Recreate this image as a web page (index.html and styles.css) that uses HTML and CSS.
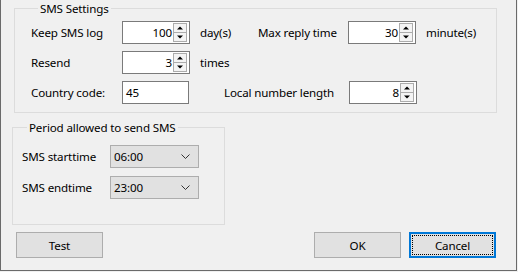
FILE: index.html
```html
<!DOCTYPE html>
<html lang="en">
<head>
    <meta charset="UTF-8" />
    <title>SMS Settings</title>
    <link rel="stylesheet" href="styles.css">
</head>
<body>

<div class="window">
    <fieldset class="group group-sms">
        <legend>SMS Settings</legend>

        <div class="row">
            <span class="label w-label">Keep SMS log</span>
            <div class="spin">
                <span class="val">100</span>
                <span class="arrows"><i class="up"></i><i class="down"></i></span>
            </div>
            <span class="unit w-unit">day(s)</span>
            <span class="label w-label2">Max reply time</span>
            <div class="spin">
                <span class="val">30</span>
                <span class="arrows"><i class="up"></i><i class="down"></i></span>
            </div>
            <span class="unit">minute(s)</span>
        </div>

        <div class="row">
            <span class="label w-label">Resend</span>
            <div class="spin">
                <span class="val">3</span>
                <span class="arrows"><i class="up"></i><i class="down"></i></span>
            </div>
            <span class="unit">times</span>
        </div>

        <div class="row">
            <span class="label w-label">Country code:</span>
            <div class="textbox">45</div>
            <span class="label w-label3">Local number length</span>
            <div class="spin">
                <span class="val">8</span>
                <span class="arrows"><i class="up"></i><i class="down"></i></span>
            </div>
        </div>
    </fieldset>

    <fieldset class="group group-period">
        <legend>Period allowed to send SMS</legend>

        <div class="row">
            <span class="label w-label4">SMS starttime</span>
            <div class="combo">
                <span>06:00</span>
                <svg width="9" height="5" viewBox="0 0 9 5"><path d="M0.5 0.5 L4.5 4.5 L8.5 0.5" fill="none" stroke="#333" stroke-width="1"/></svg>
            </div>
        </div>
        <div class="row">
            <span class="label w-label4">SMS endtime</span>
            <div class="combo">
                <span>23:00</span>
                <svg width="9" height="5" viewBox="0 0 9 5"><path d="M0.5 0.5 L4.5 4.5 L8.5 0.5" fill="none" stroke="#333" stroke-width="1"/></svg>
            </div>
        </div>
    </fieldset>

    <div class="buttons">
        <button class="btn">Test</button>
        <span class="spacer"></span>
        <button class="btn">OK</button>
        <button class="btn btn-focus">Cancel</button>
    </div>
</div>

</body>
</html>
```

FILE: styles.css
```css
html, body {
    margin: 0;
    padding: 0;
    background: #f0f0f0;
    font-family: "Segoe UI", "Noto Sans", Arial, sans-serif;
    font-size: 11.6px;
    letter-spacing: -0.15px;
    color: #000;
}

.window {
    box-sizing: border-box;
    width: 517px;
    height: 271px;
    background: #f0f0f0;
    border: 1px solid #6a6a6a;
    border-top: none;
    position: relative;
    overflow: hidden;
}

/* GROUP BOXES */
.group {
    box-sizing: border-box;
    border: 1px solid #dcdcdc;
    padding: 0;
    margin: 0;
}
.group legend {
    padding: 0 2px;
    line-height: 15px;
}

.group-sms {
    margin: 1px 0 0 13px;
    width: 483px;
    padding: 5px 0 8px 16px;
}
.group-sms legend {
    margin-left: 7px;
}
.group-sms .row + .row {
    margin-top: 7px;
}

.group-period {
    margin: 7px 0 0 11px;
    width: 213px;
    padding: 10px 0 25px 9px;
}
.group-period legend {
    margin-left: 5px;
}
.group-period .row + .row {
    margin-top: 8px;
}

.row {
    display: flex;
    align-items: center;
    height: 23px;
}

.label, .unit {
    white-space: nowrap;
}
.w-label { width: 91px; }
.w-label2 { width: 90px; }
.w-label3 { width: 125px; margin-left: 35px; }
.w-label4 { width: 88px; }
.w-unit { width: 58px; }
.unit { margin-left: 10px; }
.w-unit { margin-left: 10px; }

/* SPIN BOX */
.spin {
    box-sizing: border-box;
    width: 68px;
    height: 23px;
    border: 1px solid #7a7a7a;
    background: #fff;
    display: flex;
    align-items: stretch;
    padding: 1px 2px 1px 0;
}
.spin .val {
    flex: 1;
    text-align: right;
    line-height: 19px;
    padding-right: 1px;
}
.spin .arrows {
    display: flex;
    flex-direction: column;
    width: 14px;
}
.spin .arrows i {
    flex: 1;
    position: relative;
    box-sizing: border-box;
    border: 1px solid #acacac;
    background: #f4f4f4;
}
.spin .arrows i + i {
    border-top: none;
}
.spin .arrows i::after {
    content: "";
    position: absolute;
    left: 50%;
    top: 50%;
    transform: translate(-50%, -50%);
    border-left: 3px solid transparent;
    border-right: 3px solid transparent;
}
.spin .arrows .up::after {
    border-bottom: 3px solid #000;
}
.spin .arrows .down::after {
    border-top: 3px solid #000;
}

.textbox {
    box-sizing: border-box;
    width: 67px;
    height: 23px;
    border: 1px solid #7a7a7a;
    background: #fff;
    line-height: 21px;
    padding-left: 3px;
}

/* COMBO */
.combo {
    box-sizing: border-box;
    width: 89px;
    height: 23px;
    border: 1px solid #adadad;
    background: #e1e1e1;
    display: flex;
    align-items: center;
    justify-content: space-between;
    padding: 0 8px 0 3px;
}

/* BUTTONS */
.buttons {
    display: flex;
    margin: 7px 0 0 15px;
    width: 480px;
}
.spacer {
    flex: 1;
}
.btn {
    box-sizing: border-box;
    width: 87px;
    height: 26px;
    border: 1px solid #adadad;
    background: #e1e1e1;
    font: inherit;
    letter-spacing: inherit;
    color: #000;
    padding: 0;
    position: relative;
}
.btn + .btn {
    margin-left: 8px;
}
.btn-focus {
    border: 1px solid #0078d7;
    box-shadow: inset 0 0 0 1px #0078d7;
}
.btn-focus::after {
    content: "";
    position: absolute;
    inset: 2px;
    border: 1px dotted #000;
}
```
